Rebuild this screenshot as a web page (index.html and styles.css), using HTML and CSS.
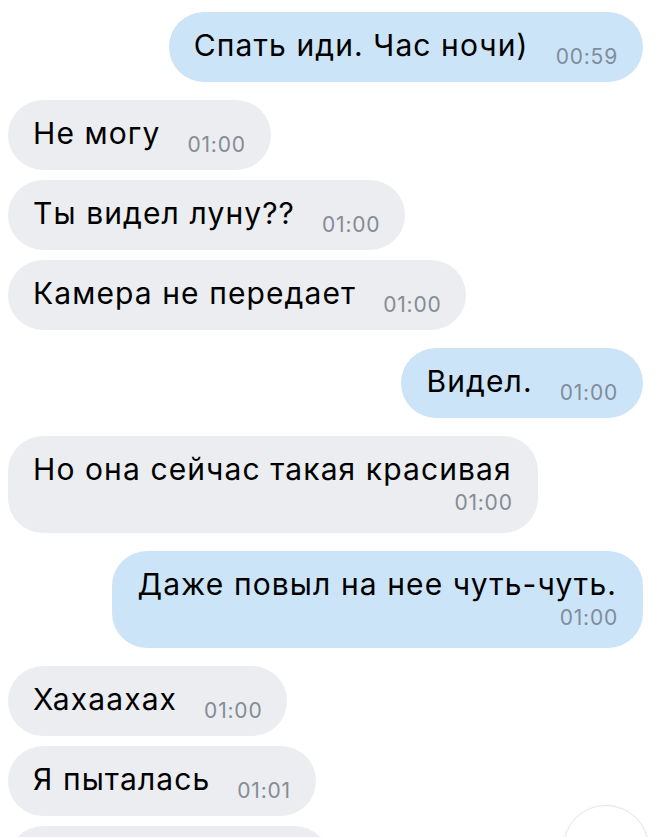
FILE: index.html
```html
<!DOCTYPE html>
<html lang="ru">
<head>
<meta charset="utf-8">
<title>Чат</title>
<link rel="stylesheet" href="styles.css">
</head>
<body>
<div class="chat">
  <div class="msg out"><div class="bubble">Спать иди. Час ночи)<span class="time">00:59</span></div></div>
  <div class="msg in gap"><div class="bubble">Не могу<span class="time">01:00</span></div></div>
  <div class="msg in"><div class="bubble">Ты видел луну??<span class="time">01:00</span></div></div>
  <div class="msg in"><div class="bubble">Камера не передает<span class="time">01:00</span></div></div>
  <div class="msg out gap"><div class="bubble">Видел.<span class="time">01:00</span></div></div>
  <div class="msg in gap"><div class="bubble multi"><div class="text">Но она сейчас такая красивая</div><div class="time-row">01:00</div></div></div>
  <div class="msg out gap"><div class="bubble multi"><div class="text">Даже повыл на нее чуть-чуть.</div><div class="time-row">01:00</div></div></div>
  <div class="msg in gap"><div class="bubble">Хахаахах<span class="time">01:00</span></div></div>
  <div class="msg in"><div class="bubble">Я пыталась<span class="time">01:01</span></div></div>
  <div class="msg in"><div class="bubble partial"></div></div>
</div>
<div class="scroll-btn"></div>
</body>
</html>
```
FILE: styles.css
```css
html, body {
  margin: 0;
  padding: 0;
  background: #ffffff;
  overflow: hidden;
  height: 837px;
}
body {
  font-family: Inter, "Noto Sans", sans-serif;
  color: #000;
  position: relative;
}
.chat {
  display: flex;
  flex-direction: column;
  padding: 12px 18px 0 8px;
}
.msg {
  display: flex;
  margin-top: 10px;
}
.msg:first-child { margin-top: 0; }
.msg.gap { margin-top: 18px; }
.msg.out { justify-content: flex-end; }
.msg.in { justify-content: flex-start; }
.bubble {
  font-size: 30px;
  letter-spacing: 1.1px;
  line-height: 36px;
  padding: 15px 26px 19px 25px;
  border-radius: 35px;
  white-space: nowrap;
}
.out .bubble { background: #cce4f7; }
.in .bubble { background: #ebedf0; }
.time {
  font-size: 21px;
  letter-spacing: 0.8px;
  line-height: 0;
  margin-left: 27px;
  margin-right: -1px;
  vertical-align: -8px;
  color: #858c95;
}
.out .time, .out .time-row { color: #7f8d9c; }
.bubble.multi {
  padding: 15px 26px 14px 25px;
}
.time-row {
  text-align: right;
  font-size: 21px;
  letter-spacing: 0.8px;
  line-height: 32px;
  margin-right: -1px;
  color: #858c95;
}
.bubble.partial {
  width: 271px;
  height: 70px;
  padding-top: 0;
  padding-bottom: 0;
}
.scroll-btn {
  position: absolute;
  left: 563px;
  top: 805px;
  width: 84px;
  height: 84px;
  border-radius: 50%;
  background: #ffffff;
  border: 1px solid #e6e7ea;
  box-shadow: 0 1px 4px rgba(0, 0, 0, 0.06);
}
```
